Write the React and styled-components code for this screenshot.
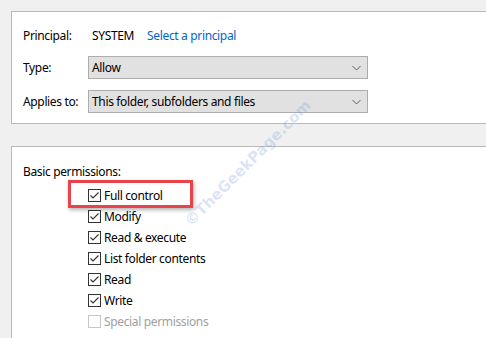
import React from "react";
import styled, { createGlobalStyle } from "styled-components";

const Global = createGlobalStyle`
  html, body { margin: 0; padding: 0; background: #f0f0f0; overflow: hidden; }
  body { font-family: "Segoe UI", "Noto Sans", "Open Sans", sans-serif; font-size: 12px; letter-spacing: -0.35px; color: #000; }
`;

const Page = styled.div`
  position: relative;
  width: 486px;
  height: 338px;
  padding: 11px 0 0 11px;
  box-sizing: border-box;
  overflow: hidden;
`;

const Panel = styled.div`
  background: #fff;
  border: 1px solid #b9b9b9;
  border-right: none;
  padding: ${(p) => p.$pad};
  margin-top: ${(p) => p.$mt || 0}px;
  ${(p) => (p.$open ? "border-bottom: none; height: 200px;" : "")}
`;

const FieldRow = styled.div`
  display: grid;
  grid-template-columns: 65px 280px;
  align-items: center;
  height: 23px;
  margin-bottom: ${(p) => p.$mb || 0}px;
`;

const Label = styled.span`
  line-height: 16px;
  white-space: nowrap;
`;

const Value = styled.div`
  display: flex;
  align-items: center;
  gap: 13px;
  padding-left: 4px;
`;

const Link = styled.span`
  color: #0066cc;
`;

const Select = styled.div`
  display: flex;
  align-items: center;
  justify-content: space-between;
  height: 23px;
  box-sizing: border-box;
  background: #e1e1e1;
  border: 1px solid #adadad;
  padding: 0 6px 0 3px;
  white-space: nowrap;
`;

const Chevron = () => (
  <svg width="9" height="6" viewBox="0 0 9 6">
    <path d="M0.5 1 L4.5 5 L8.5 1" fill="none" stroke="#606060" strokeWidth="1" />
  </svg>
);

const SectionLabel = styled.div`
  line-height: 16px;
  margin-bottom: 5px;
`;

const List = styled.div`
  display: flex;
  flex-direction: column;
  margin-left: 65px;
`;

const CheckRow = styled.div`
  position: relative;
  display: flex;
  align-items: center;
  gap: 3px;
  height: 21px;
  color: ${(p) => (p.$disabled ? "#a0a0a0" : "#000")};
`;

const Box = styled.span`
  display: inline-flex;
  align-items: center;
  justify-content: center;
  width: 13px;
  height: 13px;
  box-sizing: border-box;
  border: 1px solid ${(p) => (p.$disabled ? "#c6c6c6" : "#333")};
  background: #fff;
`;

const Highlight = styled.div`
  position: absolute;
  left: -20px;
  top: -5px;
  width: 125px;
  height: 28px;
  box-sizing: border-box;
  border: 3px solid #e8434a;
  box-shadow: 1px 2px 4px rgba(0, 0, 0, 0.3);
  pointer-events: none;
`;

const Watermark = styled.div`
  position: absolute;
  left: 164px;
  top: 158px;
  width: 160px;
  text-align: center;
  font-family: "DejaVu Sans", sans-serif;
  font-weight: bold;
  font-size: 15px;
  letter-spacing: 0;
  color: rgba(110, 150, 225, 0.25);
  transform: rotate(-45deg);
  pointer-events: none;
  white-space: nowrap;
`;

const Check = ({ checked, disabled, label, highlight }) => (
  <CheckRow $disabled={disabled}>
    {highlight && <Highlight />}
    <Box $disabled={disabled}>
      {checked && (
        <svg width="11" height="11" viewBox="0 0 11 11">
          <path d="M1.5 5.5 L4 8 L9.5 2.5" fill="none" stroke="#333" strokeWidth="1.1" />
        </svg>
      )}
    </Box>
    <span>{label}</span>
  </CheckRow>
);

const perms = [
  ["Full control", true],
  ["Modify", true],
  ["Read & execute", true],
  ["List folder contents", true],
  ["Read", true],
  ["Write", true],
];

export default function App() {
  return (
    <Page>
      <Global />
      <Panel $pad="12px 0 10px 11px">
        <FieldRow $mb={9}>
          <Label>Principal:</Label>
          <Value>
            <span>SYSTEM</span>
            <Link>Select a principal</Link>
          </Value>
        </FieldRow>
        <FieldRow $mb={11}>
          <Label>Type:</Label>
          <Select>
            <span>Allow</span>
            <Chevron />
          </Select>
        </FieldRow>
        <FieldRow>
          <Label>Applies to:</Label>
          <Select>
            <span>This folder, subfolders and files</span>
            <Chevron />
          </Select>
        </FieldRow>
      </Panel>
      <Panel $pad="17px 0 0 11px" $mt={22} $open>
        <SectionLabel>Basic permissions:</SectionLabel>
        <List>
          {perms.map(([l, c], i) => (
            <Check key={l} label={l} checked={c} highlight={i === 0} />
          ))}
          <Check label="Special permissions" disabled />
        </List>
      </Panel>
      <Watermark>©TheGeekPage.com</Watermark>
    </Page>
  );
}
